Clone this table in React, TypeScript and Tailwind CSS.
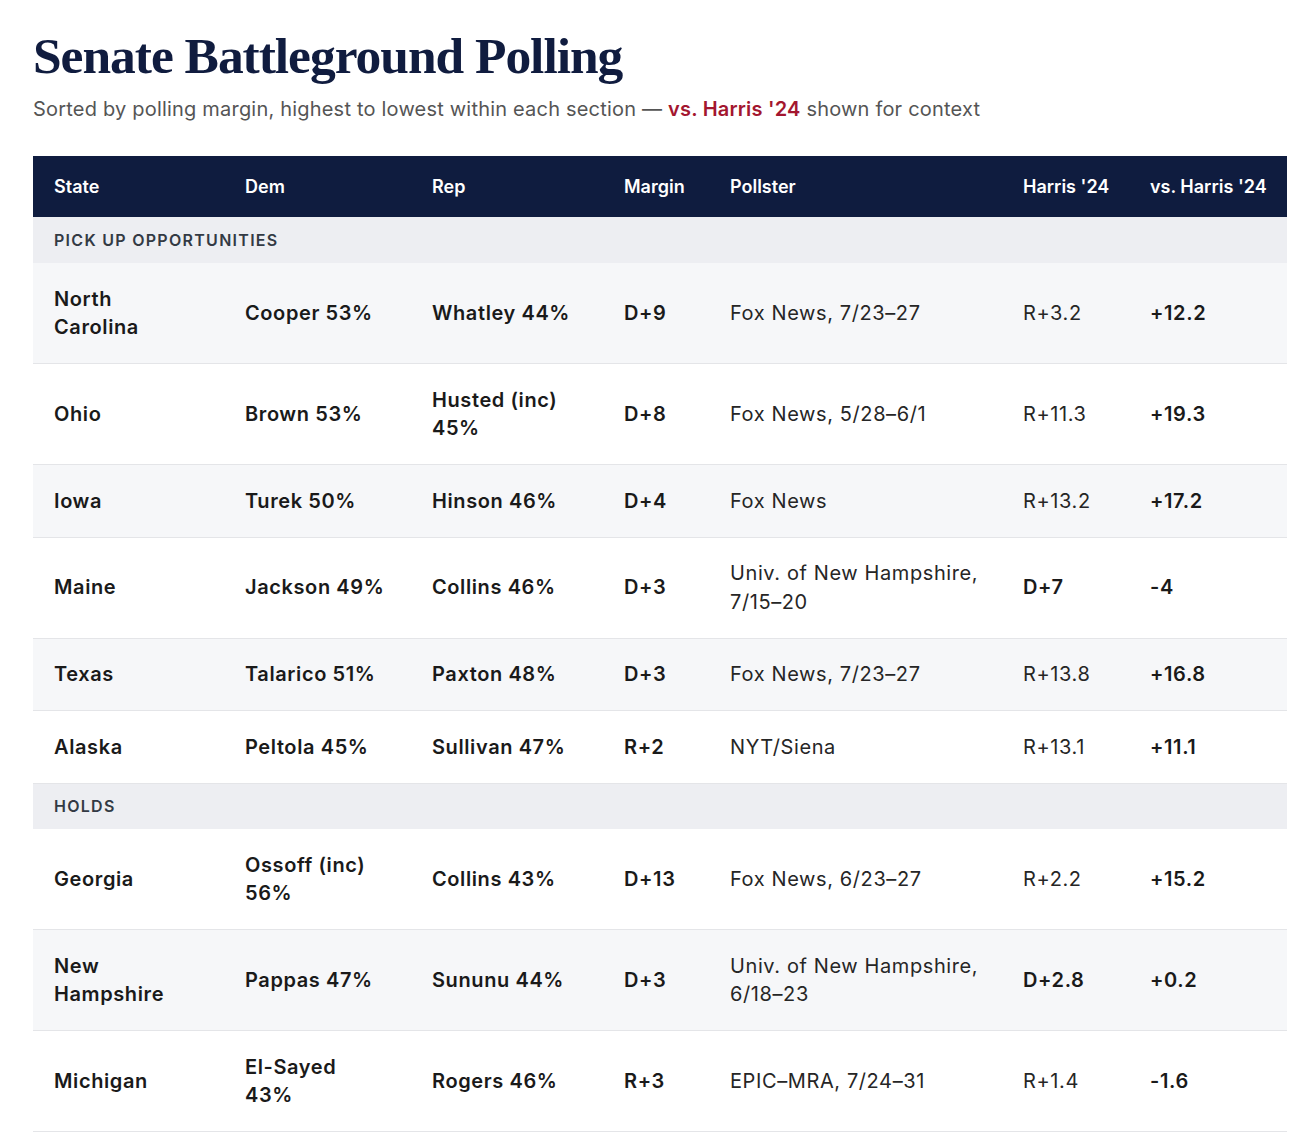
import React from "react";

type Row = {
  state: string;
  dem: string;
  rep: string;
  margin: string;
  pollster: string;
  harris: string;
  harrisBold?: boolean;
  vs: string;
};

const pickups: Row[] = [
  { state: "North Carolina", dem: "Cooper 53%", rep: "Whatley 44%", margin: "D+9", pollster: "Fox News, 7/23–27", harris: "R+3.2", vs: "+12.2" },
  { state: "Ohio", dem: "Brown 53%", rep: "Husted (inc) 45%", margin: "D+8", pollster: "Fox News, 5/28–6/1", harris: "R+11.3", vs: "+19.3" },
  { state: "Iowa", dem: "Turek 50%", rep: "Hinson 46%", margin: "D+4", pollster: "Fox News", harris: "R+13.2", vs: "+17.2" },
  { state: "Maine", dem: "Jackson 49%", rep: "Collins 46%", margin: "D+3", pollster: "Univ. of New Hampshire, 7/15–20", harris: "D+7", harrisBold: true, vs: "-4" },
  { state: "Texas", dem: "Talarico 51%", rep: "Paxton 48%", margin: "D+3", pollster: "Fox News, 7/23–27", harris: "R+13.8", vs: "+16.8" },
  { state: "Alaska", dem: "Peltola 45%", rep: "Sullivan 47%", margin: "R+2", pollster: "NYT/Siena", harris: "R+13.1", vs: "+11.1" },
];

const holds: Row[] = [
  { state: "Georgia", dem: "Ossoff (inc) 56%", rep: "Collins 43%", margin: "D+13", pollster: "Fox News, 6/23–27", harris: "R+2.2", vs: "+15.2" },
  { state: "New Hampshire", dem: "Pappas 47%", rep: "Sununu 44%", margin: "D+3", pollster: "Univ. of New Hampshire, 6/18–23", harris: "D+2.8", harrisBold: true, vs: "+0.2" },
  { state: "Michigan", dem: "El-Sayed 43%", rep: "Rogers 46%", margin: "R+3", pollster: "EPIC–MRA, 7/24–31", harris: "R+1.4", vs: "-1.6" },
];

function SectionRow({ label }: { label: string }) {
  return (
    <tr className="bg-[#edeef2]">
      <td colSpan={7} className="h-[46px] px-[21px] text-[16px] font-semibold tracking-[0.08em] text-[#333a44] uppercase">
        {label}
      </td>
    </tr>
  );
}

function DataRow({ r, shaded }: { r: Row; shaded: boolean }) {
  const cell = "pl-[21px] py-[21.5px] align-middle leading-[28.5px]";
  return (
    <tr className={`${shaded ? "bg-[#f6f7f9]" : "bg-white"} border-b border-[#e4e5e8]`}>
      <td className={`${cell} pr-[34px] font-semibold`}>{r.state}</td>
      <td className={`${cell} pr-[24px] font-semibold`}>{r.dem}</td>
      <td className={`${cell} pr-[21px] font-semibold`}>{r.rep}</td>
      <td className={`${cell} pr-[21px] font-semibold`}>{r.margin}</td>
      <td className={`${cell} pr-[21px] font-normal text-[#262626]`}>{r.pollster}</td>
      <td className={`${cell} pr-[21px] ${r.harrisBold ? "font-semibold" : "font-normal text-[#262626]"}`}>{r.harris}</td>
      <td className={`${cell} pr-[21px] font-semibold`}>{r.vs}</td>
    </tr>
  );
}

export default function App() {
  return (
    <div className="min-h-screen bg-white px-[33px] pt-[24px] pb-[16px] text-[#1a1a1a]" style={{ fontFamily: "Inter, 'Liberation Sans', sans-serif" }}>
      <h1
        className="text-[51.5px] leading-[64px] font-bold tracking-[-0.02em] text-[#101c3f]"
        style={{ fontFamily: "'Liberation Serif', 'DejaVu Serif', serif" }}
      >
        Senate Battleground Polling
      </h1>
      <p className="mt-[8px] text-[20px] leading-[26px] tracking-[0.01em] text-[#555555]">
        Sorted by polling margin, highest to lowest within each section —{" "}
        <span className="font-semibold text-[#a3162f]">vs. Harris '24</span> shown for context
      </p>
      <table className="mt-[34px] w-full table-fixed border-collapse text-[20px] tracking-[0.03em]">
        <colgroup>
          <col className="w-[191px]" />
          <col className="w-[187px]" />
          <col className="w-[192px]" />
          <col className="w-[106px]" />
          <col className="w-[293px]" />
          <col className="w-[127px]" />
          <col className="w-[158px]" />
        </colgroup>
        <thead>
          <tr className="bg-[#0f1c3f] text-white">
            {["State", "Dem", "Rep", "Margin", "Pollster", "Harris '24", "vs. Harris '24"].map((h) => (
              <th key={h} className="h-[61px] px-[21px] text-left text-[18px] tracking-normal font-semibold whitespace-nowrap">
                {h}
              </th>
            ))}
          </tr>
        </thead>
        <tbody>
          <SectionRow label="Pick up opportunities" />
          {pickups.map((r, i) => (
            <DataRow key={r.state} r={r} shaded={i % 2 === 0} />
          ))}
          <SectionRow label="Holds" />
          {holds.map((r, i) => (
            <DataRow key={r.state} r={r} shaded={i % 2 === 1} />
          ))}
        </tbody>
      </table>
    </div>
  );
}
